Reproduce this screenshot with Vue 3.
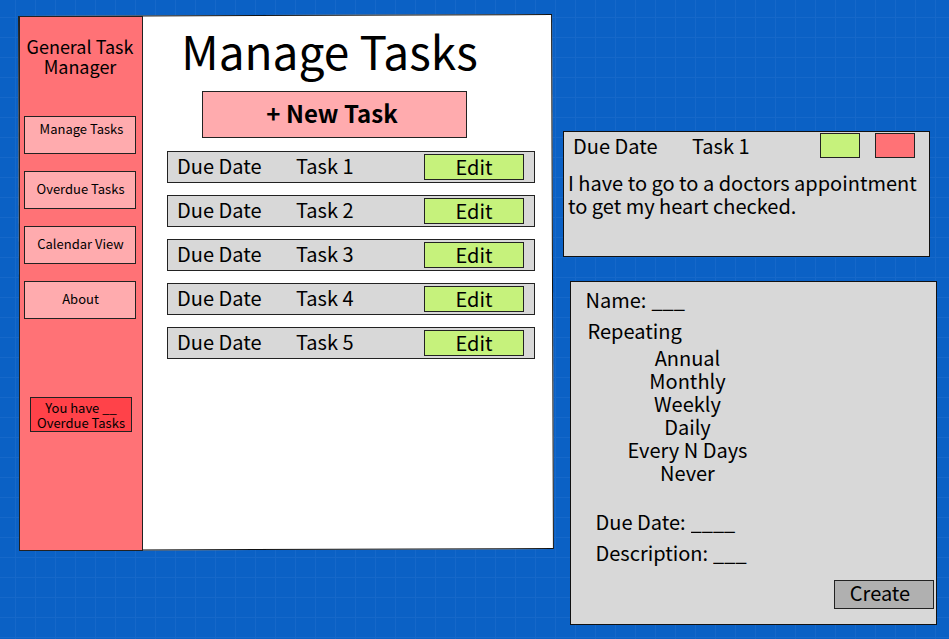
<script setup>
import { ref } from 'vue'

const navItems = ['Manage Tasks', 'Overdue Tasks', 'Calendar View', 'About']
const current = ref('Manage Tasks')
const tasks = ['Task 1', 'Task 2', 'Task 3', 'Task 4', 'Task 5']
const intervals = ['Annual', 'Monthly', 'Weekly', 'Daily', 'Every N Days', 'Never']
const repeating = ref('')
const name = ref('___')
const dueDate = ref('____')
const description = ref('___')
</script>

<template>
  <div class="board">
    <div class="window">
      <aside class="sidebar">
        <h2 class="brand">General Task Manager</h2>
        <nav class="nav">
          <a
            v-for="item in navItems"
            :key="item"
            href="#"
            class="nav-link"
            :class="{ current: item === current }"
            @click.prevent="current = item"
          >{{ item }}</a>
        </nav>
        <p class="notice">You have __<br />Overdue Tasks</p>
      </aside>

      <main class="content">
        <h1 class="title">Manage Tasks</h1>
        <button type="button" class="new-task">+ New Task</button>
        <ul class="tasks">
          <li v-for="task in tasks" :key="task" class="task">
            <span class="due">Due Date</span>
            <span class="task-name">{{ task }}</span>
            <button type="button" class="edit">Edit</button>
          </li>
        </ul>
      </main>
    </div>

    <div class="side">
      <section class="card detail">
        <header class="detail-head">
          <span class="due">Due Date</span>
          <span class="task-name">Task 1</span>
          <button type="button" class="swatch done" aria-label="Complete"></button>
          <button type="button" class="swatch remove" aria-label="Delete"></button>
        </header>
        <p class="detail-text">I have to go to a doctors appointment to get my heart checked.</p>
      </section>

      <form class="card form" @submit.prevent>
        <div class="field">
          <label for="name">Name:</label>
          <input id="name" v-model="name" type="text" />
        </div>
        <fieldset class="repeat">
          <legend>Repeating</legend>
          <div class="options">
            <label v-for="interval in intervals" :key="interval" class="option">
              <input v-model="repeating" type="radio" name="repeating" :value="interval" />{{ interval }}
            </label>
          </div>
        </fieldset>
        <div class="field inset">
          <label for="due">Due Date:</label>
          <input id="due" v-model="dueDate" type="text" />
        </div>
        <div class="field inset">
          <label for="description">Description:</label>
          <input id="description" v-model="description" type="text" />
        </div>
        <button type="submit" class="create">Create</button>
      </form>
    </div>
  </div>
</template>

<style>
body {
  margin: 0;
}
</style>

<style scoped>
.board,
.board * {
  box-sizing: border-box;
}

.board {
  display: grid;
  grid-template-columns: minmax(0, 534fr) minmax(0, 374fr);
  gap: 10px;
  align-items: start;
  min-height: 100vh;
  padding: 16px 12px 14px 19px;
  background-color: #0b61c5;
  background-image:
    linear-gradient(to right, #1668c9 1px, transparent 1px),
    linear-gradient(to bottom, #1668c9 1px, transparent 1px);
  background-size: 20px 20px;
  background-position: 15px 17px;
  color: #000;
  font-family: "Noto Sans CJK SC", "Noto Sans", sans-serif;
  font-size: 20px;
  line-height: 23px;
}

h1,
h2,
p,
ul,
fieldset {
  margin: 0;
  padding: 0;
  font-weight: 400;
}

button,
input {
  margin: 0;
  padding: 0;
  color: inherit;
  font: inherit;
}

button {
  border: 1px solid #222;
  border-radius: 0;
}

.window {
  position: relative;
  display: flex;
}

/* The window sheet sits slightly askew behind its contents. */
.window::before {
  content: "";
  position: absolute;
  inset: -1px 0 1px;
  border: 1px solid #111;
  background: #fff;
  transform: rotate(-0.2deg);
}

.sidebar {
  position: relative;
  flex: 0 0 124px;
  padding: 19px 6px 118px 4px;
  border: 1px solid #222;
  background: #ff7276;
  text-align: center;
}

.brand {
  font-size: 18px;
  line-height: 20px;
}

.nav {
  display: flex;
  flex-direction: column;
  gap: 17px;
  margin-top: 40px;
  font-size: 13px;
  line-height: 15px;
}

.nav-link {
  display: flex;
  align-items: center;
  justify-content: center;
  height: 38px;
  padding: 0 0 3px 1px;
  border: 1px solid #222;
  background: #ffabae;
  color: inherit;
  text-decoration: none;
}

.nav-link.current {
  align-items: flex-start;
  padding: 4px 0 0 3px;
}

.notice {
  margin: 78px 4px 0 6px;
  padding: 2px 0 1px;
  border: 1px solid #222;
  background: #ff4249;
  font-size: 13px;
  line-height: 15px;
  white-space: nowrap;
}

.content {
  position: relative;
  flex: 1;
  min-width: 0;
  padding: 9px 18px 0 24px;
}

.title {
  margin-right: 43px;
  font-size: 46px;
  line-height: 51px;
  text-align: center;
}

.new-task {
  display: block;
  width: 72%;
  height: 47px;
  margin: 15px 0 0 35px;
  padding: 0 5px 4px 0;
  background: #ffabae;
  font-size: 24px;
  font-weight: 700;
  line-height: 24px;
}

.tasks {
  display: flex;
  flex-direction: column;
  gap: 12px;
  margin-top: 13px;
  list-style: none;
}

.task,
.detail-head {
  display: flex;
  align-items: center;
}

.task {
  height: 32px;
  padding: 0 10px 0 9px;
  border: 1px solid #222;
  background: #d8d8d8;
}

.task span {
  padding-bottom: 3px;
}

.due {
  flex: 0 0 119px;
}

.task-name {
  flex: 1;
}

.edit {
  width: 100px;
  height: 26px;
  padding-bottom: 2px;
  background: #c6f27c;
}

.side {
  display: flex;
  flex-direction: column;
  gap: 24px;
  padding-top: 115px;
}

.card {
  width: 98%;
  border: 1px solid #111;
  background: #d8d8d8;
}

.detail {
  padding: 1px 0 39px 4px;
}

.detail-head {
  gap: 15px;
  padding: 0 14px 0 5px;
}

.detail-head .due {
  flex-basis: 104px;
}

.swatch {
  width: 40px;
  height: 25px;
}

.done {
  background: #c6f27c;
}

.remove {
  background: #ff7276;
}

.detail-text {
  margin-top: 13px;
}

.form {
  display: flex;
  flex-direction: column;
  align-self: flex-end;
  padding: 6px 2px 15px 14px;
}

.field {
  display: flex;
  align-items: center;
  gap: 5px;
  height: 23px;
  margin-bottom: 8px;
}

.field input {
  flex: 1;
  min-width: 0;
  height: 31px;
  border: 0;
  background: transparent;
}

.inset {
  padding-left: 10px;
}

.repeat {
  min-width: 0;
  margin-bottom: 26px;
  border: 0;
}

.repeat legend {
  padding: 0 2px;
}

.options {
  display: flex;
  flex-direction: column;
  align-items: center;
  width: 204px;
  margin-top: 4px;
}

.option {
  display: flex;
  white-space: nowrap;
}

.option input {
  width: 0;
  height: 0;
  appearance: none;
}

.create {
  align-self: flex-end;
  width: 100px;
  height: 29px;
  margin-top: 8px;
  padding: 0 8px 4px 0;
  background: #b0b0b0;
}
</style>
